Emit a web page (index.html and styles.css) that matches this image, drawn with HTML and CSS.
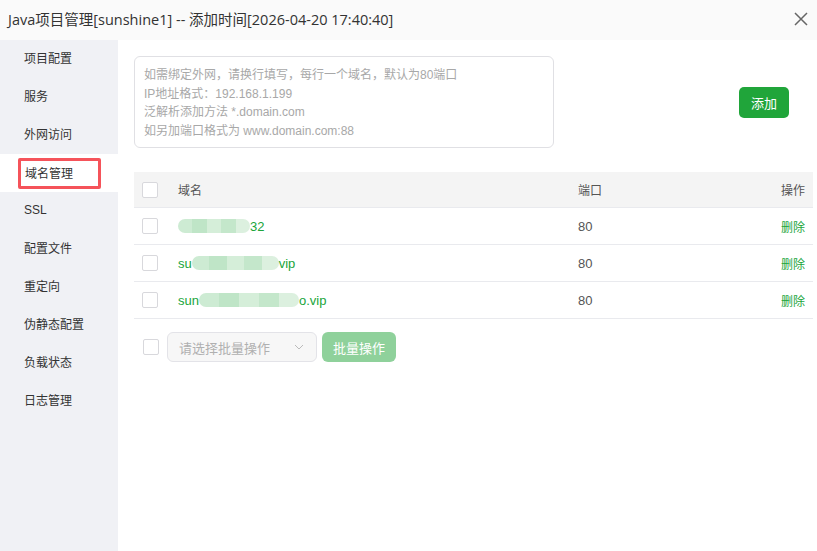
FILE: index.html
```html
<!DOCTYPE html>
<html>
<head>
<meta charset="utf-8">
<link rel="stylesheet" href="styles.css">
</head>
<body>
<div class="dialog">
  <div class="titlebar">
    <span class="title">Java项目管理[sunshine1] -- 添加时间[2026-04-20 17:40:40]</span>
    <svg class="close" width="14" height="14" viewBox="0 0 14 14"><path d="M1 1L13 13M13 1L1 13" stroke="#666" stroke-width="1.5"/></svg>
  </div>
  <div class="body">
    <div class="sidebar">
      <div class="item">项目配置</div>
      <div class="item">服务</div>
      <div class="item">外网访问</div>
      <div class="item active"><span class="hl">域名管理</span></div>
      <div class="item">SSL</div>
      <div class="item">配置文件</div>
      <div class="item">重定向</div>
      <div class="item">伪静态配置</div>
      <div class="item">负载状态</div>
      <div class="item">日志管理</div>
    </div>
    <div class="main">
      <div class="toprow">
        <div class="textarea">如需绑定外网，请换行填写，每行一个域名，默认为80端口<br>IP地址格式：192.168.1.199<br>泛解析添加方法 *.domain.com<br>如另加端口格式为 www.domain.com:88</div>
        <button class="btn-add">添加</button>
      </div>
      <div class="table">
        <div class="row head">
          <span class="cb"></span>
          <span class="c-name">域名</span>
          <span class="c-port">端口</span>
          <span class="c-op">操作</span>
        </div>
        <div class="row">
          <span class="cb"></span>
          <span class="c-name link"><span class="blur b1"></span>32</span>
          <span class="c-port">80</span>
          <span class="c-op link">删除</span>
        </div>
        <div class="row">
          <span class="cb"></span>
          <span class="c-name link">su<span class="blur b2"></span>vip</span>
          <span class="c-port">80</span>
          <span class="c-op link">删除</span>
        </div>
        <div class="row">
          <span class="cb"></span>
          <span class="c-name link">sun<span class="blur b3"></span>o.vip</span>
          <span class="c-port">80</span>
          <span class="c-op link">删除</span>
        </div>
      </div>
      <div class="batch">
        <span class="cb"></span>
        <div class="select"><span>请选择批量操作</span>
          <svg width="10" height="6" viewBox="0 0 10 6"><path d="M1 1L5 5L9 1" fill="none" stroke="#bbb" stroke-width="1"/></svg>
        </div>
        <button class="btn-batch">批量操作</button>
      </div>
    </div>
  </div>
</div>
</body>
</html>
```
FILE: styles.css
```css
* { box-sizing: border-box; }
html, body { margin: 0; padding: 0; }
body {
  width: 817px; height: 551px; overflow: hidden;
  font-family: "Liberation Sans", "Noto Sans CJK SC", sans-serif;
  color: #333; background: #fff;
}
.dialog { display: flex; flex-direction: column; height: 551px; }
.titlebar {
  height: 40px; flex: none; background: #fafafa;
  display: flex; align-items: center; justify-content: space-between;
  padding: 0 8px 3px 8px;
}
.title { font-family: "Open Sans", "Noto Sans CJK SC", sans-serif; font-size: 14.5px; color: #333; }
.close { margin-right: 1px; }
.body { flex: 1; display: flex; }
.sidebar { width: 118px; flex: none; background: #f0f1f5; }
.item {
  height: 38px; display: flex; align-items: center;
  padding-left: 24px; padding-bottom: 3px; font-size: 12px; color: #333;
}
.item.active { background: #fff; padding-left: 18px; padding-bottom: 0; }
.hl {
  display: flex; align-items: center;
  width: 83px; height: 31px; padding-left: 4px; padding-bottom: 2px;
  border: 3px solid #f5535a; border-radius: 2px;
}
.main { flex: 1; padding: 16px 4px 0 16px; }
.toprow { display: flex; align-items: center; }
.textarea {
  width: 420px; height: 92px; border: 1px solid #e0e0e4; border-radius: 6px;
  padding: 9px 9px; font-size: 12px; line-height: 18.5px; color: #a8a8a8;
}
.btn-add {
  margin-left: 185px; width: 50px; height: 31px;
  background: #20a53a; color: #fff; border: none; border-radius: 5px;
  font-family: inherit; font-size: 13px; padding: 0;
}
.table { margin-top: 24px; }
.row {
  display: flex; align-items: center; height: 37px;
  border-bottom: 1px solid #e9eaee; font-size: 12px;
}
.row.head { background: #f4f4f4; height: 36px; color: #555; }
.cb {
  width: 16px; height: 16px; border: 1px solid #d8d8dc; border-radius: 2px;
  background: #fff; margin-left: 8px; flex: none;
}
.c-name { margin-left: 20px; width: 400px; display: flex; align-items: center; font-size: 13px; }
.head .c-name { font-size: 12px; }
.c-port { width: 180px; color: #555; font-size: 13px; }
.head .c-port { font-size: 12px; }
.c-op { flex: 1; text-align: right; padding-right: 8px; }
.link { color: #20a53a; }
.head .c-op, .head .c-name { color: #555; }
.blur {
  display: inline-block; height: 14px; border-radius: 7px;
  background: linear-gradient(90deg, #cdebd3 0 20%, #bfe5c7 20% 40%, #d5eed9 40% 60%, #c4e7cb 60% 80%, #dcf0df 80%);
}
.b1 { width: 72px; }
.b2 { width: 87px; }
.b3 { width: 100px; }
.batch { display: flex; align-items: center; margin-top: 13px; }
.batch .cb { margin-left: 9px; }
.select {
  margin-left: 8px; width: 150px; height: 30px;
  border: 1px solid #e3e3e8; border-radius: 6px; background: #f7f7f7;
  display: flex; align-items: center; justify-content: space-between;
  padding: 0 12px 0 11px; font-size: 13px; color: #b0b0b0;
}
.btn-batch {
  margin-left: 5px; width: 74px; height: 30px; border: none; border-radius: 6px;
  background: #8fd19b; color: #fff; font-family: inherit; font-size: 13px; padding: 0;
}
```
